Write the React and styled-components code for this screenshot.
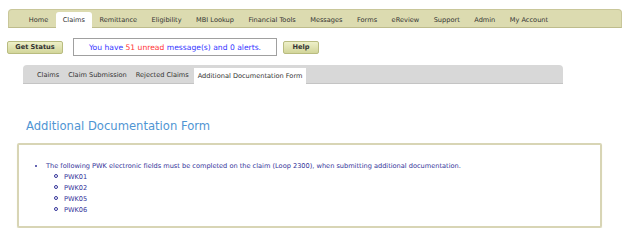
import React from 'react'
import styled, {createGlobalStyle} from 'styled-components'

const GlobalStyle = createGlobalStyle`
    body {
        margin: 0;
        background: #ffffff;
        font-family: "DejaVu Sans", Verdana, sans-serif;
    }
`

const PAGE_DIV = styled.div`
    width: 627px;
    padding-top: 9px;
`

const TOP_NAV = styled.div`
    display: flex;
    align-items: flex-end;
    margin-left: 8px;
    width: 614px;
    height: 19px;
    padding-left: 13px;
    box-sizing: border-box;
    background: #dcdbb0;
    border: 1px solid #c9c79a;
    border-bottom: 1px solid #bebc8c;
    border-radius: 4px 4px 0 0;
    gap: 1px;
`

const NAV_ITEM = styled.div`
    height: ${props => props.active ? '16px' : '15px'};
    display: flex;
    align-items: center;
    padding: 0 6.75px;
    font-size: 6.6px;
    color: #333333;
    background: ${props => props.active ? '#ffffff' : 'transparent'};
    border-radius: 3px 3px 0 0;
    margin-bottom: ${props => props.active ? '-1px' : '0'};
`

const STATUS_ROW = styled.div`
    display: flex;
    align-items: center;
    margin: 10px 0 0 7px;
    height: 18px;
`

const OLIVE_BUTTON = styled.div`
    width: ${props => props.width}px;
    height: 13px;
    box-sizing: border-box;
    display: flex;
    align-items: center;
    justify-content: center;
    font-size: 6.6px;
    font-weight: bold;
    color: #333333;
    background: linear-gradient(#eef0c8, #d2d59a);
    border: 1px solid #b9bc80;
    border-radius: 2px;
`

const MESSAGE_BOX = styled.div`
    width: 204px;
    height: 18px;
    box-sizing: border-box;
    margin: 0 6px 0 10px;
    display: flex;
    align-items: center;
    justify-content: center;
    border: 1px solid #a0a0a0;
    font-size: 7.6px;
    color: #3333ff;
    white-space: pre;
`

const RED_SPAN = styled.span`
    color: #ff3333;
`

const SUB_NAV = styled.div`
    display: flex;
    align-items: flex-end;
    margin: 9px 0 0 23px;
    width: 540px;
    height: 19px;
    padding-left: 10px;
    box-sizing: border-box;
    background: #d8d8d8;
    border-radius: 4px 4px 0 0;
    border-bottom: 1px solid #c4c4c4;
    gap: 1px;
`

const SUB_ITEM = styled.div`
    height: 16px;
    display: flex;
    align-items: center;
    padding: 0 4px;
    font-size: 6.6px;
    color: #333333;
    background: ${props => props.active ? '#ffffff' : 'transparent'};
    margin-bottom: ${props => props.active ? '-1px' : '0'};
`

const HEADING = styled.h2`
    margin: 35px 0 0 26px;
    font-size: 11.6px;
    font-weight: normal;
    color: #4f95d3;
    line-height: 14px;
`

const CONTENT_BOX = styled.div`
    margin: 10px 0 0 17px;
    width: 585px;
    height: 85px;
    box-sizing: border-box;
    border: 2px solid #d8d5b5;
    border-radius: 2px;
    box-shadow: 0 1px 1px #e6e4cc;
    padding-top: 16px;
`

const OUTER_LIST = styled.ul`
    margin: 0;
    padding-left: 27px;
    font-size: 6.6px;
    color: #333399;
    line-height: 11px;
    list-style-type: disc;
`

const INNER_LIST = styled.ul`
    margin: 0;
    padding-left: 17px;
    list-style: none;
`

const CIRCLE_ITEM = styled.li`
    &::before {
        content: '';
        display: inline-block;
        width: 2px;
        height: 2px;
        border: 1px solid #333399;
        border-radius: 50%;
        margin: 0 6px 0 -9px;
        vertical-align: 1px;
    }
`

export default function App() {
    const navItems = ['Home', 'Claims', 'Remittance', 'Eligibility', 'MBI Lookup', 'Financial Tools', 'Messages', 'Forms', 'eReview', 'Support', 'Admin', 'My Account']
    const subItems = ['Claims', 'Claim Submission', 'Rejected Claims', 'Additional Documentation Form']
    const pwkFields = ['PWK01', 'PWK02', 'PWK05', 'PWK06']

    return (
        <PAGE_DIV>
            <GlobalStyle />
            <TOP_NAV>
                {navItems.map((item) => (
                    <NAV_ITEM key={item} active={item === 'Claims'}>{item}</NAV_ITEM>
                ))}
            </TOP_NAV>
            <STATUS_ROW>
                <OLIVE_BUTTON width={56}>Get Status</OLIVE_BUTTON>
                <MESSAGE_BOX>
                    You have <RED_SPAN>51 unread</RED_SPAN> message(s) and 0 alerts.
                </MESSAGE_BOX>
                <OLIVE_BUTTON width={36}>Help</OLIVE_BUTTON>
            </STATUS_ROW>
            <SUB_NAV>
                {subItems.map((item) => (
                    <SUB_ITEM key={item} active={item === 'Additional Documentation Form'}>{item}</SUB_ITEM>
                ))}
            </SUB_NAV>
            <HEADING>Additional Documentation Form</HEADING>
            <CONTENT_BOX>
                <OUTER_LIST>
                    <li>
                        The following PWK electronic fields must be completed on the claim (Loop 2300), when submitting additional documentation.
                        <INNER_LIST>
                            {pwkFields.map((field) => (
                                <CIRCLE_ITEM key={field}>{field}</CIRCLE_ITEM>
                            ))}
                        </INNER_LIST>
                    </li>
                </OUTER_LIST>
            </CONTENT_BOX>
        </PAGE_DIV>
    )
}
